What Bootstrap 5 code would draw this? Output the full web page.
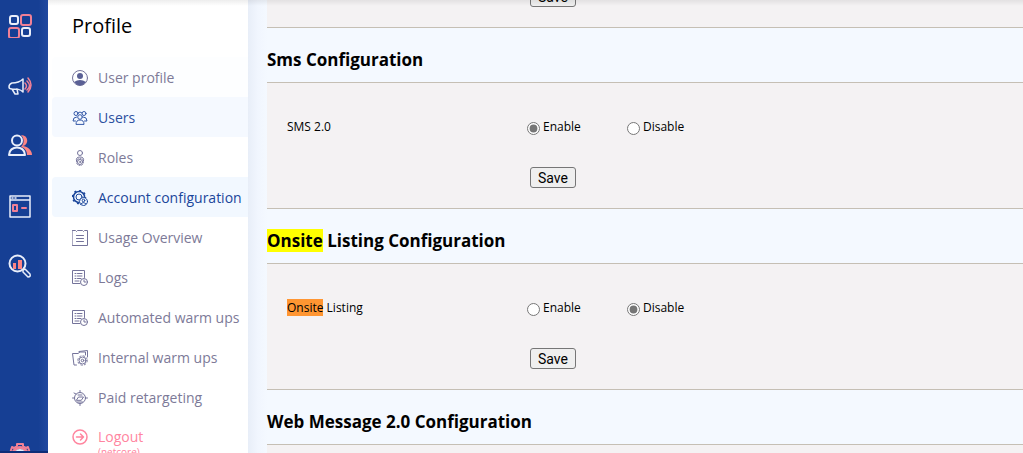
<!DOCTYPE html>
<html lang="en">
<head>
<meta charset="utf-8">
<meta name="viewport" content="width=device-width, initial-scale=1">
<title>Account configuration</title>
<link href="https://cdn.jsdelivr.net/npm/bootstrap@5.3.0/dist/css/bootstrap.min.css" rel="stylesheet">
<style>
body{font-family:"Open Sans","Noto Sans",sans-serif;background:#f4f9ff;color:#000}
.rail{width:48px;padding-top:14px;gap:36px;background:linear-gradient(90deg,#163f94 80%,#2048a0)}
.rail-link{height:24px;padding-left:8px}
.rail-foot{height:10px;padding-left:8px;border-bottom:2px solid #0d2d78}
.rail svg,.side svg{flex:none;fill:none;stroke-width:2;stroke-linecap:round;stroke-linejoin:round}
.rail svg{stroke:#e9eefa}
.rail .pk{stroke:#f08096}
.rail .pf{fill:#fb8484;stroke:none}
.side{width:200px;background:#fff;padding-left:4px}
.side-title{font-size:20px;line-height:26px;padding:13px 0 0 20px;margin:0 0 18px;font-weight:500}
.side-link{height:40px;padding-left:20px;gap:10px;font-size:14px;color:#7d7a98;border-radius:4px 0 0 4px;text-decoration:none;white-space:nowrap}
.side-link svg{stroke:#74739a;stroke-width:1;margin-top:2px}
.side-link.tint{background:#fdfeff}
.side-link.hover{background:#f5f9ff;color:#2c50a0}
.side-link.active{background:#f2f8ff;color:#1b469b}
.side-link.hover svg{stroke:#3358a8}
.side-link.active svg{stroke:#1b469b}
.side-link.exit{height:38px;color:#ff859f}
.side-link.exit svg{stroke:#ff859f;stroke-width:1.5}
.exit-sub{font-size:10px;line-height:12px;color:#ff859f;padding-left:46px;margin-top:-9px}
.content{padding-left:19px;background:linear-gradient(90deg,#e8eef8,#f1f6fe 10px,#f4f9ff 20px)}
.panel{background:#f4f2f3;border:solid #c5bfb4;border-width:1px 0;padding:35px 20px 20px}
.panel-tail{height:28px;overflow:hidden;padding-top:0;border-top:0}
.sec-title{font-size:17px;line-height:24px;font-weight:700;margin:0;padding:20px 0 10px}
.field-name{width:240px}
.field-opt{width:100px;gap:3px}
.field{font-size:12px;line-height:18px;margin-bottom:31px}
.field input{width:13px;height:13px;margin:4px 0 0;accent-color:#767676;filter:grayscale(1)}
.save{margin-left:243px;width:46px;height:21px;font:14px/17px Roboto,"Liberation Sans",sans-serif;border:1px solid #767676;border-radius:3px;background:#efefef;color:#000;padding:1px 0 0}
.hit{background:#ff0;color:#000}
.hit-now{background:#ff9632;color:#000}
.top-shade{height:6px;background:linear-gradient(rgba(0,0,0,.07),rgba(0,0,0,0));left:48px;pointer-events:none}
</style>
</head>
<body class="overflow-hidden">
<div class="d-flex vh-100 overflow-hidden position-relative">
<nav class="rail d-flex flex-column flex-shrink-0 overflow-hidden" aria-label="Main">
  <a href="#" class="rail-link d-flex align-items-center flex-shrink-0" aria-label="Dashboard"><svg width="24" height="24" viewBox="0 0 24 24"><rect x="2" y="2" width="8" height="8" rx="2"/><rect class="pk" x="13" y="1" width="10" height="10" rx="2"/><rect class="pk" x="1" y="14" width="10" height="10" rx="2"/><rect x="14" y="14" width="8" height="8" rx="2"/></svg></a>
  <a href="#" class="rail-link d-flex align-items-center flex-shrink-0" aria-label="Campaigns"><svg width="24" height="24" viewBox="0 0 24 24"><path d="M15 5C12 8 9 9 4 9q-3 1-3 4 0 2 3 2c5 0 8 0 11 3zM4 15l3 5h3l-1-5" stroke-width="1.500"/><path class="pk" stroke-width="1.500" d="M17 9q3 3 0 6M19 7q5 5 0 9M20 4q6 7 0 14"/></svg></a>
  <a href="#" class="rail-link d-flex align-items-center flex-shrink-0" aria-label="Audience"><svg width="24" height="24" viewBox="0 0 24 24"><path class="pf" d="M13 1c8 0 8 10 2 11 6 1 9 5 9 9h-5c0-4-2-7-6-8 4-4 3-9 0-12z"/><circle cx="9" cy="6.500" r="5"/><path d="M1 21c0-10 16-10 16 0z"/></svg></a>
  <a href="#" class="rail-link d-flex align-items-center flex-shrink-0" aria-label="Pages"><svg width="24" height="24" viewBox="0 0 24 24"><path stroke-width="1.500" d="M2 2h20v21H2zM2 6h20M4 4h1M7 4h1"/><path class="pk" d="M5 11h4v6H5zM14 14h4"/></svg></a>
  <a href="#" class="rail-link d-flex align-items-center flex-shrink-0" aria-label="Analytics"><svg width="24" height="24" viewBox="0 0 24 24"><circle cx="9.500" cy="9.500" r="8"/><path class="pf" d="M5 9h3v6H5zM10 6h4v9h-4z"/><path d="M15 16l2-1 5 5q1 3-2 3l-5-5z" stroke-width="1.500"/></svg></a>
  <a href="#" class="rail-foot d-flex align-items-start mt-auto overflow-hidden" aria-label="Settings"><svg width="24" height="24" viewBox="0 0 24 24"><path class="pk" d="M2 12l1-5 1-3 2 1 3-2V1h6v2l3 2 2-1 1 3 1 5"/><path class="pk" stroke-width="3" d="M5 9q7-9 14 0"/><circle cx="12" cy="12" r="5"/></svg></a>
</nav>
<aside class="side flex-shrink-0 overflow-hidden">
  <h1 class="side-title">Profile</h1>
  <nav aria-label="Profile">
  <a href="#" class="side-link tint d-flex align-items-center"><svg width="16" height="16" viewBox="0 0 16 16"><circle cx="8" cy="8" r="7.500"/><circle cx="8" cy="6" r="3" fill="#5a6095" stroke="none"/><path d="M2 12q6-4 12 0-6 7-12 0z" fill="#5a6095" stroke="none"/></svg>User profile</a>
  <a href="#" class="side-link hover d-flex align-items-center"><svg width="16" height="16" viewBox="0 0 16 16"><circle cx="4" cy="3.500" r="2"/><circle cx="12" cy="3.500" r="2"/><circle cx="8" cy="7" r="2.300"/><path d="M4 14q0-4 4-4t4 4zM3.500 11H1q0-4 3.500-4M12.500 11H15q0-4-3.500-4M6 3l2-1 2 1"/></svg>Users</a>
  <a href="#" class="side-link d-flex align-items-center"><svg width="16" height="16" viewBox="0 0 16 16"><circle cx="8" cy="3" r="2.500"/><path d="M4.500 11q-1-4 3.500-4t3.500 4"/><circle cx="8" cy="12" r="2.500"/><circle cx="8" cy="12" r="3.500" stroke-dasharray="1 1.700"/><circle cx="8" cy="12" r=".5"/></svg>Roles</a>
  <a href="#" class="side-link active d-flex align-items-center"><svg width="16" height="16" viewBox="0 0 16 16"><circle cx="7" cy="7" r="5.500" stroke-width="1.500"/><circle cx="7" cy="7" r="6.500" stroke-width="1.500" stroke-dasharray="2 3" stroke-linecap="butt"/><circle cx="7" cy="7" r="3"/><circle cx="11.500" cy="11.500" r="4" fill="#f2f8ff"/><circle cx="11.500" cy="10.500" r="1.300"/><path d="M9 14q2-3 5 0"/></svg>Account configuration</a>
  <a href="#" class="side-link d-flex align-items-center"><svg width="16" height="16" viewBox="0 0 16 16"><path d="M.5.500h3l1 1 1-1h5l1 1 1-1h3v15H.5zM4.500 5.500h7M4.500 8.500h7M4.500 11.500h7"/></svg>Usage Overview</a>
  <a href="#" class="side-link d-flex align-items-center"><svg width="16" height="16" viewBox="0 0 16 16"><path d="M8 13.500H.5V.5h12v7M3 3.500h1M5.500 3.500H10M3 6h1M5.500 6H10M3 8.500h1M5.500 8.500H9M3 11h4"/><circle cx="12" cy="12" r="3.500"/><path d="M12 10v2h2"/></svg>Logs</a>
  <a href="#" class="side-link d-flex align-items-center"><svg width="16" height="16" viewBox="0 0 16 16"><path d="M8 13.500H.5V.5h12v7M3 3.500h1M5.500 3.500H10M3 6h1M5.500 6H10M3 8.500h1M5.500 8.500H9M3 11h4"/><circle cx="12" cy="12" r="3.500"/><path d="M12 10v2h2"/></svg>Automated warm ups</a>
  <a href="#" class="side-link d-flex align-items-center"><svg width="16" height="16" viewBox="0 0 16 16"><path d="M4.500 15H2L.5 3.500H6L8 2h5.500v3M7 1.500L15.500.500V7"/><circle cx="10.500" cy="10.500" r="3.500"/><circle cx="10.500" cy="10.500" r="4.700" stroke-dasharray="1.500 2.200"/><circle cx="10.500" cy="10.500" r="1.300"/></svg>Internal warm ups</a>
  <a href="#" class="side-link d-flex align-items-center"><svg width="16" height="16" viewBox="0 0 16 16"><circle cx="8" cy="8" r="5.500"/><path d="M8 .5v2M8 13.500v2M.5 8h2M13.500 8h2M4.500 10l2-3h5l-2 3zM5.500 12h5M6 5h4M2 3l2 1"/></svg>Paid retargeting</a>
  <a href="#" class="side-link exit d-flex align-items-center"><svg width="16" height="16" viewBox="0 0 16 16"><circle cx="8" cy="8" r="7"/><path d="M4.500 8h7M8.500 5l3 3-3 3"/></svg>Logout</a>
  <div class="exit-sub">(netcore)</div>
  </nav>
</aside>
<main class="content flex-grow-1 overflow-hidden">
  <section class="panel panel-tail d-flex align-items-end"><button type="button" class="save">Save</button></section>
  <section>
    <h2 class="sec-title">Sms Configuration</h2>
    <div class="panel">
      <div class="field d-flex" role="radiogroup" aria-label="SMS 2.0">
        <span class="field-name">SMS 2.0</span>
        <label class="field-opt d-flex"><input type="radio" name="sms" checked>Enable</label>
        <label class="field-opt d-flex"><input type="radio" name="sms">Disable</label>
      </div>
      <button type="button" class="save d-block">Save</button>
    </div>
  </section>
  <section>
    <h2 class="sec-title"><span class="hit">Onsite</span> Listing Configuration</h2>
    <div class="panel">
      <div class="field d-flex" role="radiogroup" aria-label="Onsite Listing">
        <span class="field-name"><span class="hit-now">Onsite</span> Listing</span>
        <label class="field-opt d-flex"><input type="radio" name="onsite">Enable</label>
        <label class="field-opt d-flex"><input type="radio" name="onsite" checked>Disable</label>
      </div>
      <button type="button" class="save d-block">Save</button>
    </div>
  </section>
  <section>
    <h2 class="sec-title">Web Message 2.0 Configuration</h2>
    <div class="panel"></div>
  </section>
</main>
<div class="top-shade position-absolute top-0 end-0"></div>
</div>
<script src="https://cdn.jsdelivr.net/npm/bootstrap@5.3.0/dist/js/bootstrap.bundle.min.js"></script>
</body>
</html>
